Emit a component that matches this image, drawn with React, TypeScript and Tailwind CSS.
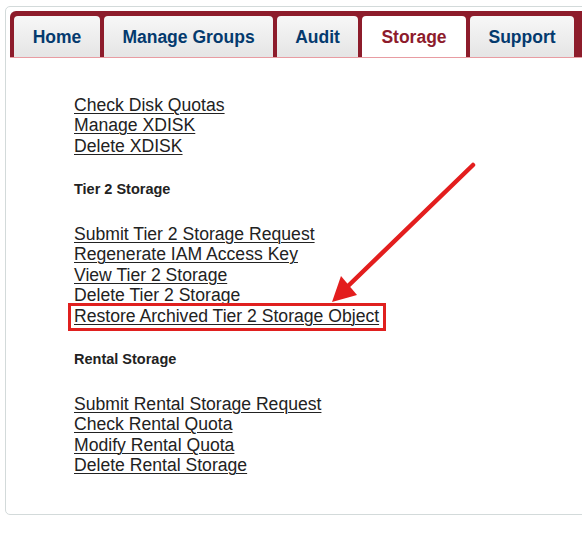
import React from "react";

const tabs = [
  { label: "Home", w: "w-[86px]" },
  { label: "Manage Groups", w: "w-[169px]" },
  { label: "Audit", w: "w-[81px]" },
  { label: "Storage", w: "w-[104px]", active: true },
  { label: "Support", w: "w-[104px]" },
];

const LinkRow = ({ text, boxed }: { text: string; boxed?: boolean }) => (
  <a href="#" className="relative block w-fit text-[#222] underline underline-offset-[2px] decoration-1">
    {text}
    {boxed && (
      <span className="pointer-events-none absolute -left-[6px] -right-[7px] -top-[2.5px] -bottom-[5px] border-[3px] border-[#e0201f]" />
    )}
  </a>
);

const Heading = ({ children }: { children: React.ReactNode }) => (
  <div className="my-[25.25px] text-[14.5px] font-bold leading-[17px] text-[#222]">{children}</div>
);

export default function App() {
  return (
    <div
      className="relative h-[534px] w-[582px] overflow-hidden bg-white"
      style={{ fontFamily: '"Liberation Sans", Arial, Helvetica, sans-serif' }}
    >
      <div className="ml-[5px] mt-[6px] w-[610px] rounded-[5px] border border-[#d3dada] p-[4px] pb-[38px]">
        {/* tab bar */}
        <div className="flex h-[47px] items-end gap-[4px] rounded-t-[6px] border-b border-[#e89ca2] bg-[#8d1c2b] pl-[4px]">
          {tabs.map((t) => (
            <div
              key={t.label}
              className={`flex h-[41px] items-center justify-center rounded-t-[4px] pt-[2px] text-[17.5px] font-bold ${t.w} ${
                t.active
                  ? "bg-white text-[#8d1b2c]"
                  : "bg-gradient-to-b from-[#f7f7f7] to-[#e5e5e5] text-[#043a6e]"
              }`}
            >
              {t.label}
            </div>
          ))}
        </div>

        {/* content */}
        <div className="pl-[64px] pt-[36.5px] text-[17.6px] leading-[20.5px]">
          <LinkRow text="Check Disk Quotas" />
          <LinkRow text="Manage XDISK" />
          <LinkRow text="Delete XDISK" />

          <Heading>Tier 2 Storage</Heading>

          <LinkRow text="Submit Tier 2 Storage Request" />
          <LinkRow text="Regenerate IAM Access Key" />
          <LinkRow text="View Tier 2 Storage" />
          <LinkRow text="Delete Tier 2 Storage" />
          <LinkRow text="Restore Archived Tier 2 Storage Object" boxed />

          <Heading>Rental Storage</Heading>

          <LinkRow text="Submit Rental Storage Request" />
          <LinkRow text="Check Rental Quota" />
          <LinkRow text="Modify Rental Quota" />
          <LinkRow text="Delete Rental Storage" />
        </div>
      </div>

      {/* annotation arrow */}
      <svg className="pointer-events-none absolute left-0 top-0" width="582" height="534" viewBox="0 0 582 534">
        <line x1="473" y1="165" x2="346" y2="288" stroke="#e31e1e" strokeWidth="4.5" strokeLinecap="round" />
        <polygon points="332,302 341,276 357,295" fill="#e31e1e" />
      </svg>
    </div>
  );
}
